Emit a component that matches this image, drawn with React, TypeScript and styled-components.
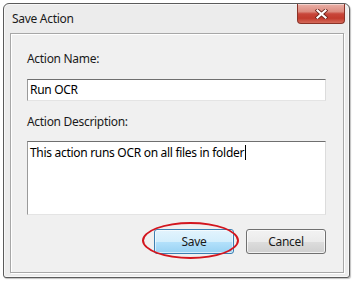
import React from "react";
import styled, { createGlobalStyle } from "styled-components";

const Global = createGlobalStyle`
  html, body { margin: 0; padding: 0; background: #ffffff; }
  body { font-family: "Noto Sans", "Open Sans", sans-serif; letter-spacing: -0.3px; }
  * { box-sizing: border-box; }
`;

const Page = styled.div`
  padding: 3px 0 0 3px;
  width: 357px;
  height: 285px;
`;

const Window = styled.div`
  width: 347px;
  height: 275px;
  border: 1px solid #5b5b5b;
  border-radius: 6px 6px 3px 3px;
  background: #ececec;
  display: flex;
  flex-direction: column;
  box-shadow: inset 0 0 0 1px #f8f8f8, 1px 1px 1px rgba(0, 0, 0, 0.25);
`;

const TitleBar = styled.div`
  height: 29px;
  display: flex;
  align-items: flex-start;
  padding-left: 8px;
  padding-right: 4px;
`;

const Title = styled.div`
  margin-top: 7px;
  font-size: 12px;
  line-height: 16px;
  color: #1a1a1a;
`;

const CloseButton = styled.div`
  margin-left: auto;
  width: 48px;
  height: 20px;
  border: 1px solid #8a3328;
  border-top: none;
  border-radius: 0 0 4px 4px;
  background: linear-gradient(
    #eab0a7 0%,
    #dd8c80 40%,
    #c8463a 52%,
    #c23b2d 75%,
    #d56a5a 100%
  );
  display: flex;
  align-items: center;
  justify-content: center;
  box-shadow: inset 0 1px 0 rgba(255, 255, 255, 0.45);
`;

const Panel = styled.div`
  margin: 0 5px 0 6px;
  height: 240px;
  border: 1px solid #a7a7a7;
  background: #f0f0f0;
  box-shadow: inset 1px 1px 0 #ffffff, 1px 1px 0 #ffffff;
  display: flex;
  flex-direction: column;
  padding: 0 17px 0 16px;
`;

const Label = styled.div<{ $top: number }>`
  margin-top: ${(p) => p.$top}px;
  height: 16px;
  font-size: 12px;
  line-height: 16px;
  color: #1a1a1a;
`;

const Field = styled.div<{ $top: number; $height: number; $multi?: boolean }>`
  margin-top: ${(p) => p.$top}px;
  height: ${(p) => p.$height}px;
  width: 299px;
  background: #ffffff;
  border-top: 1px solid #6f6f6f;
  border-left: 1px solid #9a9a9a;
  border-right: 1px solid #dcdcdc;
  border-bottom: 1px solid #e4e4e4;
  font-size: 12px;
  line-height: 16px;
  color: #000000;
  padding: ${(p) => (p.$multi ? "3px 2px 0 2px" : "0 2px")};
  display: flex;
  align-items: ${(p) => (p.$multi ? "flex-start" : "center")};
  white-space: nowrap;
`;

const Caret = styled.span`
  display: inline-block;
  width: 1px;
  height: 15px;
  background: #000000;
  margin-left: 1px;
`;

const ButtonRow = styled.div`
  margin-top: 14px;
  display: flex;
  justify-content: flex-end;
  gap: 12px;
`;

const ButtonWrap = styled.div`
  position: relative;
`;

const Button = styled.div<{ $primary?: boolean }>`
  width: 80px;
  height: 25px;
  border-radius: 3px;
  border: 1px solid ${(p) => (p.$primary ? "#3c7fb1" : "#707070")};
  background: ${(p) =>
    p.$primary
      ? "linear-gradient(#e3f4fd 0%, #d3eefc 50%, #b4e1fb 51%, #98d2f3 100%)"
      : "linear-gradient(#f2f2f2 0%, #ebebeb 50%, #dddddd 51%, #cfcfcf 100%)"};
  box-shadow: inset 0 0 0 1px
    ${(p) => (p.$primary ? "rgba(255,255,255,0.6)" : "rgba(255,255,255,0.7)")};
  display: flex;
  align-items: center;
  justify-content: center;
  font-size: 12px;
  line-height: 16px;
  color: #1a1a1a;
`;

const Highlight = styled.div`
  position: absolute;
  left: -12px;
  top: -7px;
  width: 97px;
  height: 37px;
  border: 2px solid #d3161e;
  border-radius: 50%;
  pointer-events: none;
`;

const CloseIcon = () => (
  <svg width="13" height="10" viewBox="0 0 13 10">
    <path
      d="M2.5 1.5 L10.5 8.5 M10.5 1.5 L2.5 8.5"
      stroke="#6a2219"
      strokeWidth="3.8"
      strokeLinecap="square"
    />
    <path
      d="M2.5 1.5 L10.5 8.5 M10.5 1.5 L2.5 8.5"
      stroke="#ffffff"
      strokeWidth="2.2"
      strokeLinecap="square"
    />
  </svg>
);

export default function App() {
  return (
    <>
      <Global />
      <Page>
        <Window>
          <TitleBar>
            <Title>Save Action</Title>
            <CloseButton>
              <CloseIcon />
            </CloseButton>
          </TitleBar>
          <Panel>
            <Label $top={17}>Action Name:</Label>
            <Field $top={12} $height={22}>
              Run OCR
            </Field>
            <Label $top={13}>Action Description:</Label>
            <Field $top={11} $height={74} $multi>
              This action runs OCR on all files in folder
              <Caret />
            </Field>
            <ButtonRow>
              <ButtonWrap>
                <Button $primary>Save</Button>
                <Highlight />
              </ButtonWrap>
              <ButtonWrap>
                <Button>Cancel</Button>
              </ButtonWrap>
            </ButtonRow>
          </Panel>
        </Window>
      </Page>
    </>
  );
}
